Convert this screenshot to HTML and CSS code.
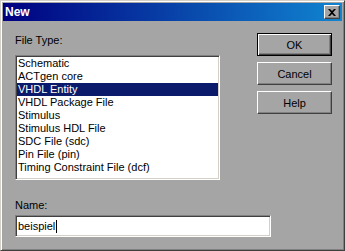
FILE: index.html
```html
<!DOCTYPE html>
<html lang="en">
<head>
    <meta charset="UTF-8">
    <title>New</title>
    <link rel="stylesheet" href="styles.css">
</head>
<body>

    <div class="dialog">
        <div class="title-bar">
            <span class="title">New</span>
            <button class="close-btn" aria-label="Close">
                <svg width="8" height="7" viewBox="0 0 8 7">
                    <path d="M0 0h2l2 2 2-2h2L5 3.5 8 7H6L4 5 2 7H0l3-3.5z" fill="#000"/>
                </svg>
            </button>
        </div>

        <div class="main">
            <div class="type-section">
                <div class="label">File Type:</div>
                <ul class="list">
                    <li>Schematic</li>
                    <li>ACTgen core</li>
                    <li class="selected">VHDL Entity</li>
                    <li>VHDL Package File</li>
                    <li>Stimulus</li>
                    <li>Stimulus HDL File</li>
                    <li>SDC File (sdc)</li>
                    <li>Pin File (pin)</li>
                    <li>Timing Constraint File (dcf)</li>
                </ul>
            </div>

            <div class="buttons">
                <button class="btn default">OK</button>
                <button class="btn">Cancel</button>
                <button class="btn">Help</button>
            </div>

            <div class="name-section">
                <div class="label">Name:</div>
                <div class="input">beispiel<span class="caret"></span></div>
            </div>
        </div>
    </div>

</body>
</html>
```

FILE: styles.css
```css
html, body {
    margin: 0;
    padding: 0;
}

body {
    font-family: 'Liberation Sans', Arial, sans-serif;
    font-size: 11px;
    color: #000;
}

.dialog {
    width: 345px;
    height: 251px;
    box-sizing: border-box;
    padding: 2px;
    background: #a5a5a5;
    border: 1px solid;
    border-color: #d4d0c8 #404040 #404040 #d4d0c8;
    box-shadow: inset 1px 1px #fff, inset -1px -1px #808080;
}

.title-bar {
    height: 18px;
    display: flex;
    align-items: center;
    justify-content: space-between;
    padding: 0 2px;
    background: linear-gradient(to right, #000080, #1084d0);
}

.title {
    color: #fff;
    font-weight: bold;
    font-size: 12px;
}

.close-btn {
    width: 16px;
    height: 14px;
    padding: 0;
    display: flex;
    align-items: center;
    justify-content: center;
    background: #a5a5a5;
    border: 1px solid;
    border-color: #fff #404040 #404040 #fff;
    box-shadow: inset -1px -1px #808080;
}

.main {
    display: grid;
    grid-template-columns: 242px 75px;
    padding: 13px 0 0 12px;
}

.label {
    height: 13px;
    line-height: 13px;
}

.list {
    list-style: none;
    margin: 8px 0 0;
    padding: 0;
    width: 205px;
    box-sizing: border-box;
    background: #fff;
    border: 1px solid;
    border-color: #808080 #fff #fff #808080;
    box-shadow: inset 1px 1px #404040, inset -1px -1px #d4d0c8;
    padding: 1px 1px 5px;
}

.list li {
    height: 13px;
    line-height: 13px;
    padding-left: 1px;
}

.list li.selected {
    background: #0b1a6b;
    color: #fff;
}

.buttons {
    display: flex;
    flex-direction: column;
    gap: 5px;
    margin-top: -1px;
}

.btn {
    width: 75px;
    height: 23px;
    padding: 0;
    font-family: inherit;
    font-size: 11px;
    color: #000;
    background: #a5a5a5;
    border: 1px solid;
    border-color: #fff #404040 #404040 #fff;
    box-shadow: inset -1px -1px #808080;
}

.btn.default {
    border: 1px solid #000;
    box-shadow: inset 1px 1px #fff, inset -1px -1px #404040, inset -2px -2px #808080;
}

.buttons .btn + .btn {
    margin-top: 1px;
}

.name-section {
    grid-column: 1 / 3;
    margin-top: 19px;
}

.input {
    margin-top: 3px;
    width: 256px;
    height: 22px;
    box-sizing: border-box;
    display: flex;
    align-items: center;
    padding-left: 2px;
    background: #fff;
    border: 1px solid;
    border-color: #808080 #fff #fff #808080;
    box-shadow: inset 1px 1px #404040, inset -1px -1px #d4d0c8;
}

.caret {
    display: inline-block;
    width: 1px;
    height: 13px;
    background: #000;
    margin-left: 1px;
}
```
